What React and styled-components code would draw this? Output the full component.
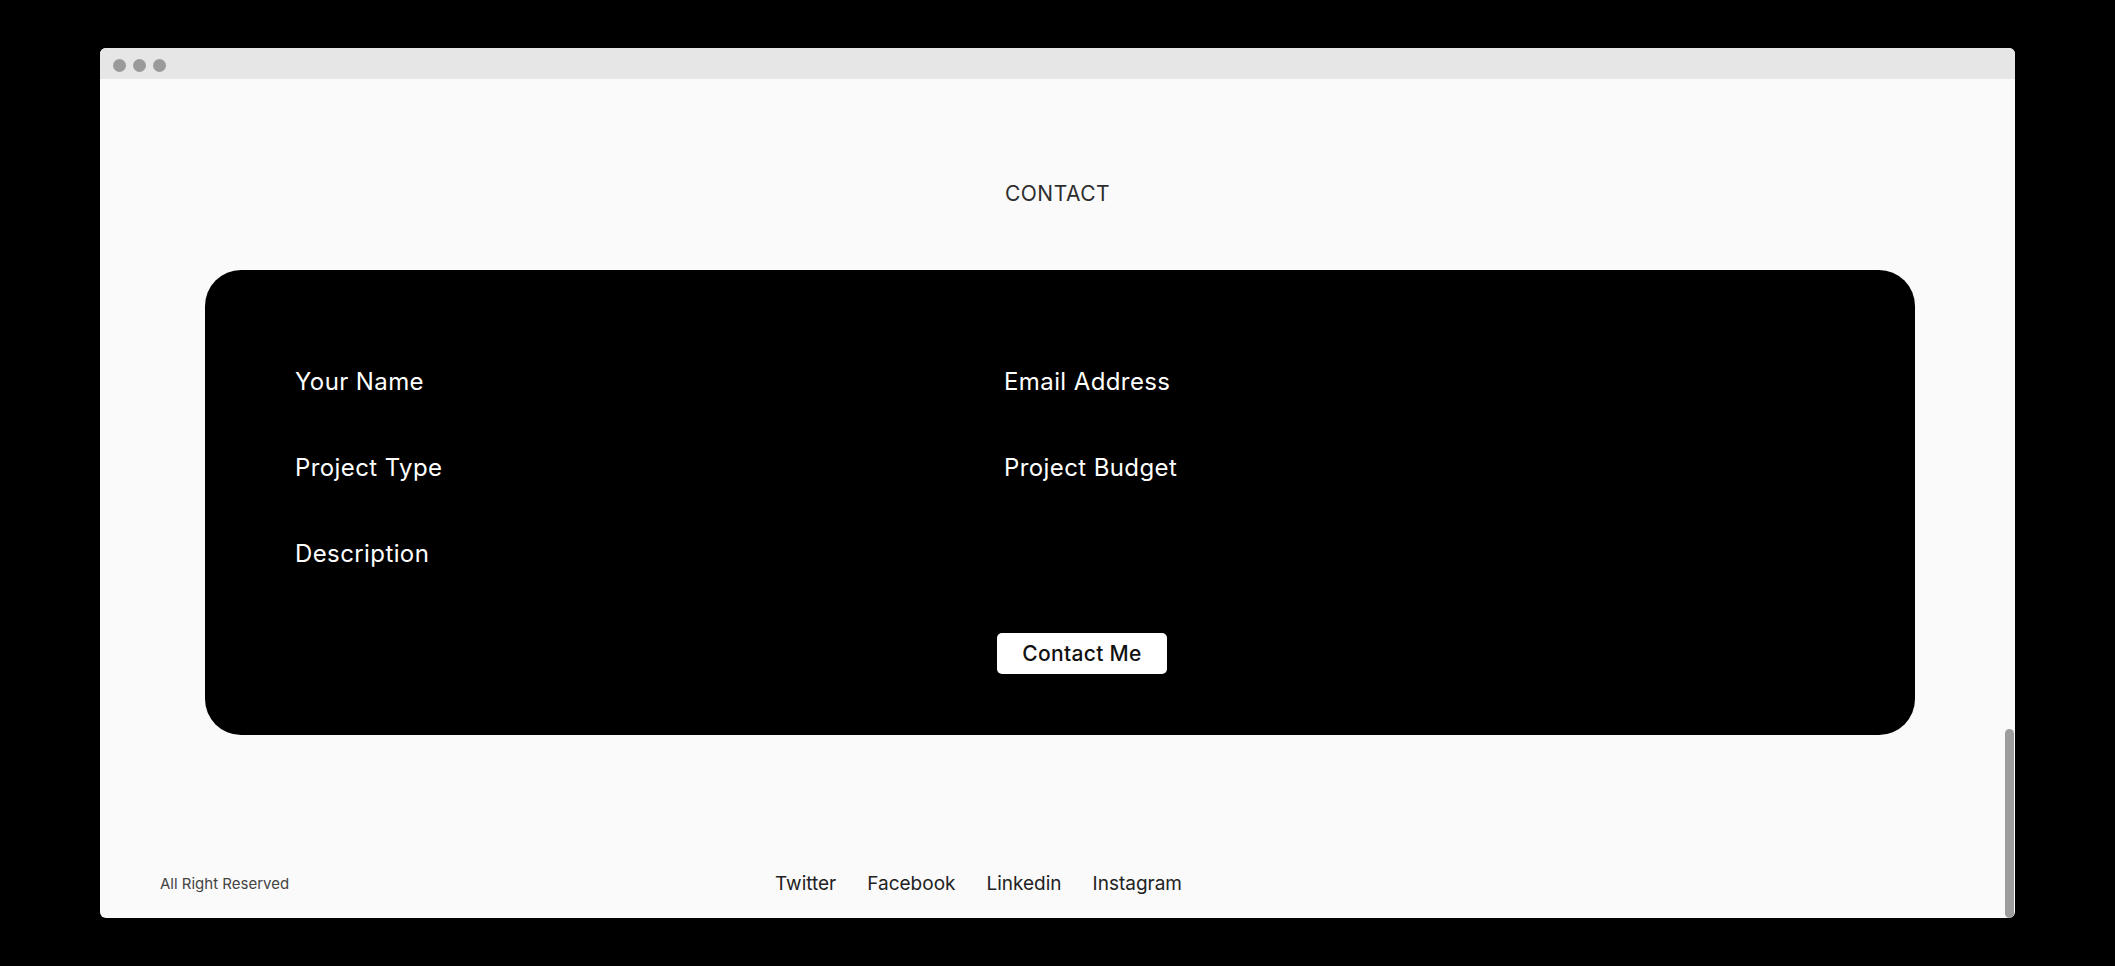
import React from 'react';
import styled, { createGlobalStyle } from 'styled-components';

const GlobalStyle = createGlobalStyle`
  * { box-sizing: border-box; }
  html, body {
    margin: 0;
    padding: 0;
    background: #000;
    font-family: "Inter", "Noto Sans", sans-serif;
  }
`;

const Screen = styled.div`
  width: 2115px;
  height: 966px;
  background: #000;
  padding: 48px 0 0 100px;
`;

const Window = styled.div`
  width: 1915px;
  height: 870px;
  border-radius: 6px;
  overflow: hidden;
  display: flex;
  flex-direction: column;
  background: #fafafa;
`;

const TitleBar = styled.div`
  height: 31px;
  flex-shrink: 0;
  background: #e6e6e6;
  display: flex;
  align-items: flex-start;
  gap: 7px;
  padding: 11px 0 0 13px;
`;

const Dot = styled.span`
  width: 13px;
  height: 13px;
  border-radius: 50%;
  background: #9a9a9a;
`;

const Content = styled.div`
  position: relative;
  flex: 1;
  display: flex;
  flex-direction: column;
  align-items: center;
`;

const Heading = styled.h2`
  margin: 100px 0 0;
  font-size: 21px;
  line-height: 30px;
  font-weight: 400;
  letter-spacing: 0.5px;
  color: #2e2e2e;
`;

const Card = styled.form`
  align-self: flex-start;
  margin: 61px 0 0 105px;
  width: 1710px;
  height: 465px;
  background: #000;
  border-radius: 36px;
  padding: 97px 0 0 90px;
  display: flex;
  flex-direction: column;
`;

const Fields = styled.div`
  display: grid;
  grid-template-columns: 709px 709px;
  row-gap: 56px;
`;

const Label = styled.label`
  font-size: 24px;
  line-height: 30px;
  font-weight: 400;
  color: #fff;
  letter-spacing: 0.4px;
`;

const Submit = styled.button`
  margin: 64px 0 0 702px;
  width: 170px;
  height: 41px;
  border: none;
  border-radius: 5px;
  background: #fff;
  color: #111;
  font-family: inherit;
  font-size: 21px;
  font-weight: 500;
  letter-spacing: 0.3px;
  cursor: pointer;
`;

const Footer = styled.footer`
  margin-top: auto;
  width: 100%;
  height: 70px;
  display: grid;
  grid-template-columns: 615px auto;
  align-items: center;
  padding-left: 60px;
`;

const Copy = styled.span`
  font-size: 15px;
  color: #444;
`;

const Links = styled.nav`
  display: flex;
  gap: 31px;
`;

const FooterLink = styled.a`
  font-size: 19px;
  color: #222;
  text-decoration: none;
`;

const Thumb = styled.div`
  position: absolute;
  right: 1px;
  bottom: 0;
  width: 9px;
  height: 189px;
  border-radius: 5px;
  background: #9d9d9d;
`;

const App = () => {
  return (
    <>
      <GlobalStyle />
      <Screen>
        <Window>
          <TitleBar>
            <Dot />
            <Dot />
            <Dot />
          </TitleBar>
          <Content>
            <Heading>CONTACT</Heading>
            <Card onSubmit={(e) => e.preventDefault()}>
              <Fields>
                <Label>Your Name</Label>
                <Label>Email Address</Label>
                <Label>Project Type</Label>
                <Label>Project Budget</Label>
                <Label>Description</Label>
              </Fields>
              <Submit type="submit">Contact Me</Submit>
            </Card>
            <Footer>
              <Copy>All Right Reserved</Copy>
              <Links>
                <FooterLink href="#">Twitter</FooterLink>
                <FooterLink href="#">Facebook</FooterLink>
                <FooterLink href="#">Linkedin</FooterLink>
                <FooterLink href="#">Instagram</FooterLink>
              </Links>
            </Footer>
            <Thumb />
          </Content>
        </Window>
      </Screen>
    </>
  );
};

export default App;
